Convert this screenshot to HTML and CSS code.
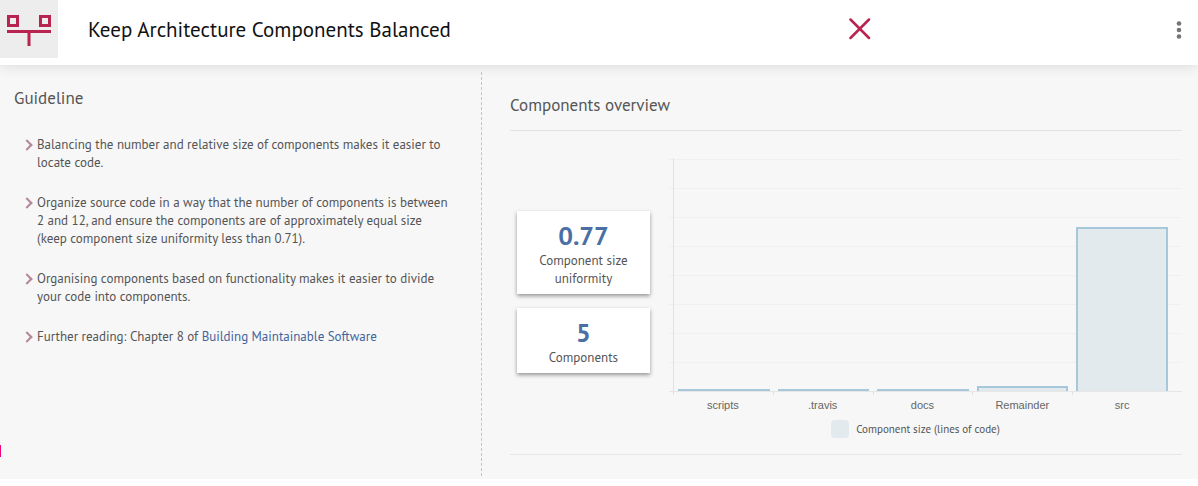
FILE: index.html
```html
<!DOCTYPE html>
<html lang="en">
<head>
<meta charset="utf-8">
<title>Keep Architecture Components Balanced</title>
<link rel="stylesheet" href="styles.css">
</head>
<body>
<header class="header">
  <div class="badge">
    <svg width="58" height="58" viewBox="0 0 58 58" fill="none" stroke="#b8234f" stroke-width="3" aria-hidden="true">
      <path d="M8.500 16.500h9v9h-9zM40.500 16.500h9v9h-9zM7 31.500h44M29 31.500v14.500"/>
    </svg>
  </div>
  <h1 class="title">Keep Architecture Components Balanced</h1>
  <button class="icon-button" type="button" aria-label="Guideline not met">
    <svg width="22" height="22" viewBox="0 0 22 22" fill="none" stroke="#b8234f" stroke-width="2.500" stroke-linecap="round"><path d="M1.500 1.500l18.500 18.500M20 1.500l-18.500 18.500"/></svg>
  </button>
  <button class="icon-button menu" type="button" aria-label="More options">
    <svg width="6" height="18" viewBox="0 0 6 18" fill="#757575"><circle cx="3" cy="2.500" r="2.300"/><circle cx="3" cy="9" r="2.300"/><circle cx="3" cy="15.500" r="2.300"/></svg>
  </button>
</header>
<main class="content">
  <section class="guideline">
    <h2 class="heading">Guideline</h2>
    <ul class="tips">
      <li>Balancing the number and relative size of components makes it easier to locate code.</li>
      <li>Organize source code in a way that the number of components is between 2 and 12, and ensure the components are of approximately equal size (keep component size uniformity less than 0.71).</li>
      <li>Organising components based on functionality makes it easier to divide your code into components.</li>
      <li>Further reading: Chapter 8 of <a href="#book">Building Maintainable Software</a></li>
    </ul>
    <span class="marker"></span>
  </section>
  <section class="overview">
    <h2 class="heading">Components overview</h2>
    <div class="overview-body">
      <div class="cards">
        <div class="card"><strong>0.77</strong><span>Component size uniformity</span></div>
        <div class="card"><strong>5</strong><span>Components</span></div>
      </div>
      <div class="chart">
        <div class="plot">
          <div class="grid-lines"><i></i><i></i><i></i><i></i><i></i><i></i><i></i><i></i></div>
          <div class="bars">
            <div class="slot"><div class="bar" style="height:0.9%"></div></div>
            <div class="slot"><div class="bar" style="height:0.5%"></div></div>
            <div class="slot"><div class="bar" style="height:0.5%"></div></div>
            <div class="slot"><div class="bar" style="height:2.1%"></div></div>
            <div class="slot"><div class="bar" style="height:70.6%"></div></div>
          </div>
        </div>
        <div class="ticks"><i></i><i></i><i></i><i></i><i></i></div>
        <div class="labels"><span>scripts</span><span>.travis</span><span>docs</span><span>Remainder</span><span>src</span></div>
        <div class="legend"><i class="swatch"></i>Component size (lines of code)</div>
      </div>
    </div>
  </section>
</main>
</body>
</html>
```
FILE: styles.css
```css
* { box-sizing: border-box; }
body {
  margin: 0;
  background: #fff;
  color: #555;
  font: 13px/18px "PT Sans", "Noto Sans", sans-serif;
}
.header {
  position: relative;
  display: grid;
  grid-template-columns: 58px 29fr 22px 12fr;
  min-height: 65px;
  background: #fff;
  box-shadow: 0 2px 12px rgba(0, 0, 0, 0.11);
}
.badge { width: 58px; height: 58px; background: #ededed; }
.badge svg { display: block; }
.title {
  margin: 0;
  padding: 16px 0 0 30px;
  color: #111;
  font-size: 21px;
  line-height: 28px;
  font-weight: 400;
}
.icon-button {
  display: block;
  margin: 17px 0 0;
  padding: 0;
  width: 22px;
  height: 24px;
  border: 0;
  background: none;
  cursor: pointer;
}
.icon-button svg { display: block; margin: auto; }
.menu { justify-self: end; margin-top: 18px; margin-right: 8px; }
.content {
  display: grid;
  grid-template-columns: 35fr 52fr;
  background: #f7f7f7;
  padding-bottom: 3px;
}
.heading {
  margin: 0;
  color: #555;
  font-size: 17px;
  line-height: 24px;
  font-weight: 400;
}
.guideline {
  position: relative;
  margin-top: 7px;
  padding: 14px 30px 0 14px;
  border-right: 1px dashed #c4c4c4;
}
.tips { margin: 26px 0 0; padding: 0; list-style: none; }
.tips li {
  position: relative;
  margin-bottom: 22px;
  padding-left: 23px;
}
.tips li::before {
  content: "";
  position: absolute;
  left: 9px;
  top: 5px;
  width: 6px;
  height: 6px;
  border: solid #b5859a;
  border-width: 2px 2px 0 0;
  transform: rotate(45deg);
}
a { color: #41659b; text-decoration: none; }
.marker {
  position: absolute;
  left: 0;
  bottom: 19px;
  width: 1px;
  height: 12px;
  background: #f0047f;
}
.overview { padding: 28px 16px 21px 28px; }
.overview-body {
  display: grid;
  grid-template-columns: 147px 1fr;
  gap: 12px;
  margin-top: 13px;
  padding: 27px 0 16px;
  border-top: 1px solid #e2e2e2;
  border-bottom: 1px solid #e6e6e6;
}
.cards { padding: 53px 7px 0; }
.card {
  margin-bottom: 14px;
  padding: 9px 16px 6px;
  background: #fff;
  box-shadow: 0 2px 4px rgba(0, 0, 0, 0.4);
  text-align: center;
}
.card strong {
  display: block;
  color: #4a6fa3;
  font-size: 26px;
  line-height: 32px;
}
.card span { display: block; }
.plot { display: grid; height: 234px; }
.grid-lines {
  grid-area: 1 / 1;
  display: flex;
  flex-direction: column;
  padding-top: 1px;
  border-bottom: 1px solid #e6e6e6;
}
.grid-lines i { flex: 1; border-top: 1px solid #f0f0f0; }
.bars {
  grid-area: 1 / 1;
  display: flex;
  margin-left: 4px;
  padding-right: 10px;
  border-left: 1px solid #e2e2e2;
}
.slot { flex: 1; display: flex; align-items: flex-end; padding: 0 4px 1px; }
.bar {
  width: 100%;
  border: 2px solid #a6c8da;
  border-bottom: 0;
  background: #e2eaed;
}
.ticks, .labels {
  display: flex;
  margin-left: 4px;
  padding-right: 10px;
}
.ticks i { flex: 1; height: 3px; border-left: 1px solid #e2e2e2; }
.labels {
  color: #666;
  font: 11px/16px "Liberation Sans", Arial, sans-serif;
  text-align: center;
}
.labels span { flex: 1; padding-top: 2px; }
.legend {
  display: flex;
  align-items: center;
  justify-content: center;
  gap: 7px;
  margin-top: 7px;
  padding-right: 20px;
  font-size: 11px;
}
.swatch { width: 18px; height: 18px; border-radius: 4px; background: #e2eaed; }
```
